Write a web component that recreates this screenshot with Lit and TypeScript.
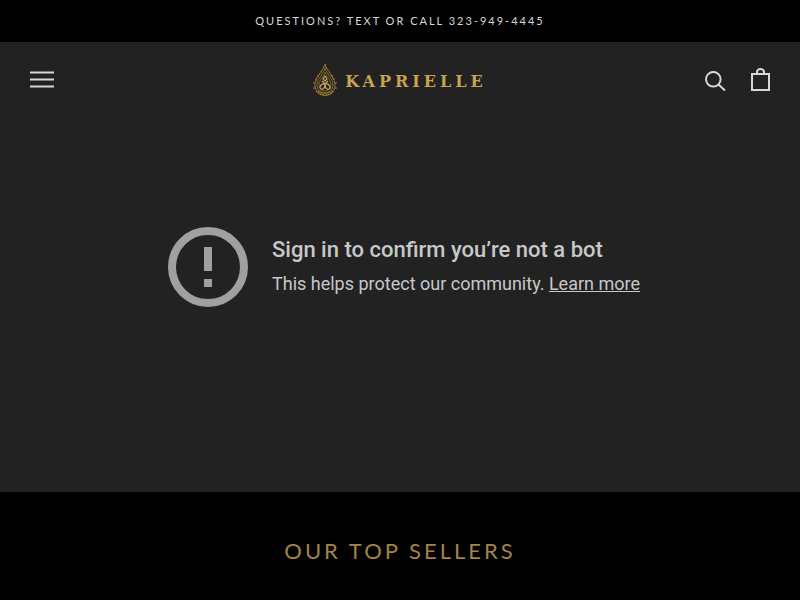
import { LitElement, html, css } from "lit";
import { customElement } from "lit/decorators.js";

@customElement("app-root")
export class AppRoot extends LitElement {
  static styles = css`
    :host {
      display: block;
      min-height: 100vh;
      background: #000;
      color: #d8d8d8;
      font-family: Lato, "Liberation Sans", sans-serif;
    }
    .announcement {
      margin: 0;
      padding: 11px 24px;
      background: #000;
      font-size: 11px;
      line-height: 20px;
      letter-spacing: 2px;
      text-align: center;
      text-transform: uppercase;
    }
    .hero {
      position: relative;
      display: flex;
      align-items: center;
      justify-content: center;
      aspect-ratio: 16 / 9;
      background: #222;
    }
    .header {
      position: absolute;
      inset: 0 0 auto;
      display: grid;
      grid-template-columns: 1fr auto 1fr;
      align-items: center;
      padding: 18px 30px;
    }
    .icon-button {
      display: flex;
      padding: 0;
      border: 0;
      background: none;
      color: inherit;
      cursor: pointer;
    }
    .actions {
      display: flex;
      justify-content: flex-end;
      align-items: center;
      gap: 25px;
    }
    .brand {
      display: flex;
      align-items: center;
      gap: 8px;
      color: #c7a352;
      font-family: "DejaVu Serif", serif;
      font-size: 16px;
      font-weight: 700;
      line-height: 36px;
      letter-spacing: 4px;
      text-decoration: none;
    }
    .wordmark {
      padding-top: 4px;
    }
    .notice {
      display: flex;
      align-items: center;
      gap: 24px;
      padding: 0 24px 0 32px;
      color: #c8c8c8;
      font-family: Roboto, "Liberation Sans", sans-serif;
      font-size: 18px;
      line-height: 24px;
    }
    .notice-icon {
      flex: none;
    }
    .notice-text {
      padding-bottom: 2px;
    }
    .notice h2 {
      margin: 0 0 8px;
      font-size: 22px;
      font-weight: 500;
      line-height: 28px;
    }
    .notice p {
      margin: 0;
    }
    .notice a {
      color: inherit;
    }
    .sellers {
      padding: 43px 24px;
      text-align: center;
    }
    .sellers h2 {
      margin: 0;
      color: #a5843f;
      font-size: 22px;
      font-weight: 400;
      line-height: 32px;
      letter-spacing: 3px;
      text-transform: uppercase;
    }
  `;

  private logo() {
    return html`
      <svg width="24" height="34" viewBox="0 0 24 34" fill="none" stroke="#a07c2e" aria-hidden="true">
        <path d="M12 1C11 7 2 14 2 22a10 10 0 0 0 20 0C22 14 13 7 12 1Z" stroke-width="1.2" stroke-dasharray="2 .6" />
        <path d="M12 5C11 10 4 16 4 22a8 8 0 0 0 16 0C20 16 13 10 12 5Z" stroke-width=".8" />
        <path d="M12 9C11 13 6 17 6 22a6 6 0 0 0 12 0C18 17 13 13 12 9Z" stroke-width=".7" />
        <path d="M3 28c4 6 14 6 18 0M5 28c4 3 10 3 14 0" stroke-width=".8" />
        <path d="M12 13l-2 3 2 2 2-2ZM9 18l3 3 3-3M12 21c-5-1-6 4-4 5s4-1 4-5c0 4 2 6 4 5s1-6-4-5" stroke="#d1aa57" stroke-width="1.2" />
        <path d="M5 12v2M3 15v2M1 19v2M1 24v2M19 12v2M21 15v2M23 19v2M23 24v2" />
      </svg>
    `;
  }

  render() {
    return html`
      <p class="announcement">Questions? Text or call 323-949-4445</p>
      <main>
        <section class="hero">
          <header class="header">
            <button class="icon-button" aria-label="Open menu">
              <svg width="24" height="20" viewBox="0 0 24 20" fill="none" stroke="currentColor" stroke-width="2">
                <path d="M0 2.5h24M0 9.5h24M0 16.5h24" />
              </svg>
            </button>
            <a class="brand" href="#">${this.logo()}<span class="wordmark">KAPRIELLE</span></a>
            <div class="actions">
              <button class="icon-button" aria-label="Search">
                <svg width="21" height="24" viewBox="0 0 21 24" fill="none" stroke="currentColor" stroke-width="2">
                  <circle cx="8.3" cy="11.3" r="7.3" />
                  <path d="M13.5 16.5l6.5 6" />
                </svg>
              </button>
              <button class="icon-button" aria-label="Open cart">
                <svg width="19" height="24" viewBox="0 0 19 24" fill="none" stroke="currentColor" stroke-width="2">
                  <path d="M1 6h17v16H1ZM6 6V4a3.5 3 0 0 1 7 0v2" />
                </svg>
              </button>
            </div>
          </header>
          <div class="notice">
            <svg class="notice-icon" width="80" height="80" viewBox="0 0 80 80" fill="none" aria-hidden="true">
              <circle cx="40" cy="40" r="36" stroke="#a0a0a0" stroke-width="8" />
              <path d="M36 20h8v24h-8ZM36 52h8v8h-8Z" fill="#a0a0a0" />
            </svg>
            <div class="notice-text">
              <h2>Sign in to confirm you’re not a bot</h2>
              <p>This helps protect our community. <a href="#">Learn more</a></p>
            </div>
          </div>
        </section>
        <section class="sellers">
          <h2>Our top sellers</h2>
        </section>
      </main>
    `;
  }
}
